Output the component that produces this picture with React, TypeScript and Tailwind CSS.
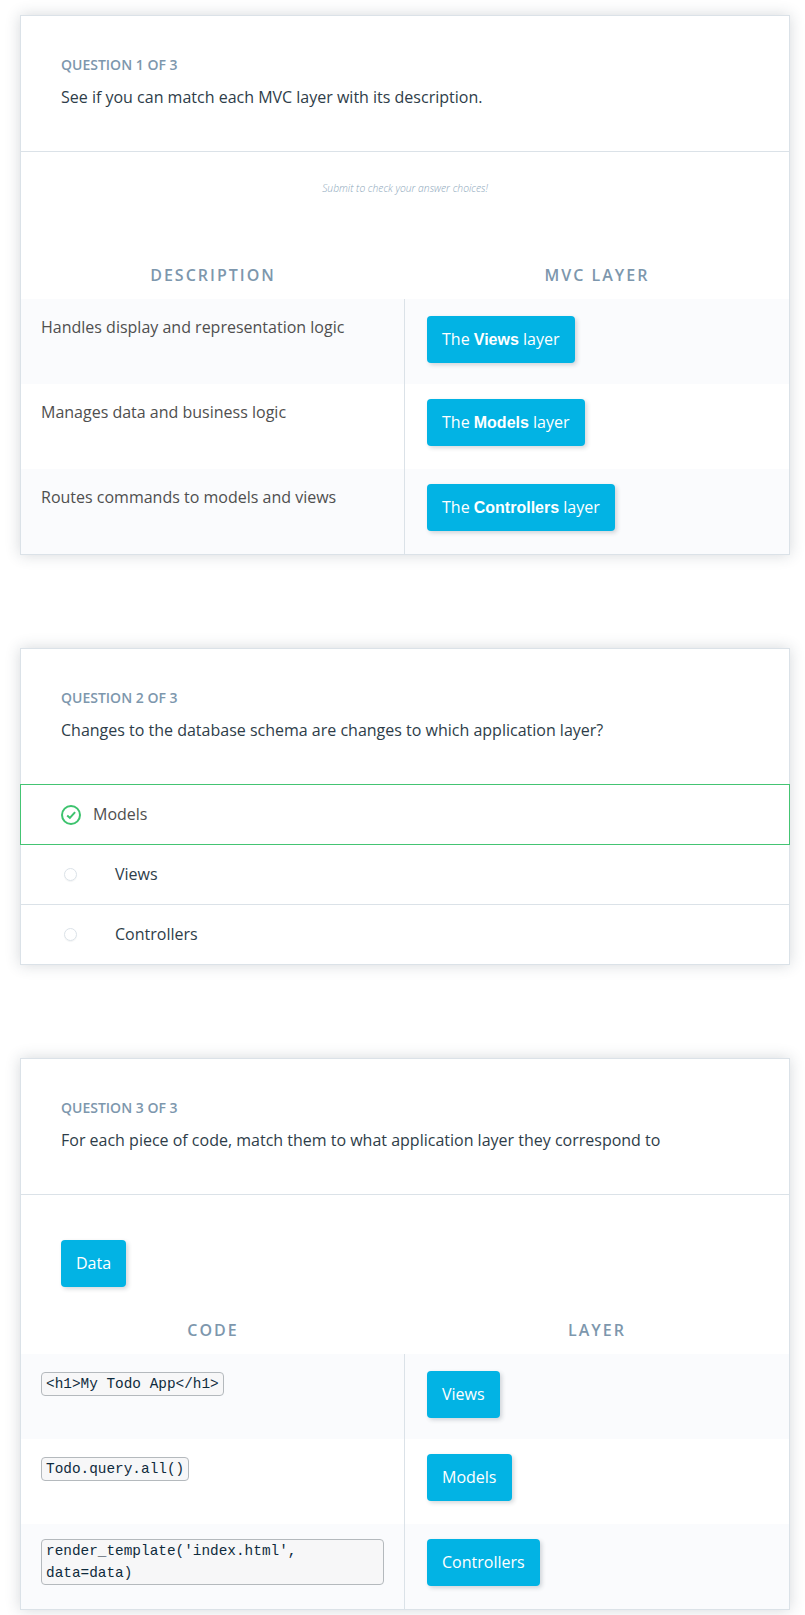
import React from "react";

function Card({ index, prompt, divided = true, children }: { index: number; prompt: string; divided?: boolean; children: React.ReactNode }) {
  return (
    <section className="w-[770px] border border-[#dbe2e8] bg-white shadow-[0_0_14px_rgba(46,61,73,0.2)]">
      <header className={divided ? "h-[136px] border-b border-[#dbe2e8] px-10 pt-[37px]" : "h-[135px] px-10 pt-[37px]"}>
        <h2 className="text-[14px] leading-6 font-semibold text-[#7d97ad]">QUESTION {index} OF 3</h2>
        <p className="mt-2 text-base leading-6 text-[#2e3d49]">{prompt}</p>
      </header>
      {children}
    </section>
  );
}

function Tile({ children }: { children: React.ReactNode }) {
  return (
    <button className="block h-[47px] rounded-[4px] bg-[#02b3e4] pt-[11px] pr-[15.4px] pb-3 pl-[15px] text-base leading-6 whitespace-nowrap text-white shadow-[2px_2px_4px_rgba(46,61,73,0.2)]">
      {children}
    </button>
  );
}

function Code({ children }: { children: React.ReactNode }) {
  return (
    <code className="block rounded-[4px] border border-[#b4b9bd] bg-[#f7f7f8] px-1 font-['Liberation_Mono',monospace] text-[14.4px] leading-[22px] text-[#0f2b3d]">
      {children}
    </code>
  );
}

function Headings({ left, right }: { left: string; right: string }) {
  return (
    <div className="flex h-12 text-center text-base leading-6 font-semibold tracking-[2px] text-[#7d97ad]">
      <div className="w-[384px] pt-3">{left}</div>
      <div className="w-[384px] pt-3">{right}</div>
    </div>
  );
}

function Row({ left, right, shaded, first }: { left: React.ReactNode; right: React.ReactNode; shaded: boolean; first: boolean }) {
  return (
    <div className={shaded ? "flex h-[85px] bg-[#fafbfd]" : "flex h-[85px] bg-white"}>
      <div className="flex w-[384px] items-start border-r border-[#dbe2e8] px-5">{left}</div>
      <div className={first ? "pt-[17px] pl-[22px]" : "pt-[15px] pl-[22px]"}>
        <Tile>{right}</Tile>
      </div>
    </div>
  );
}

function Strong({ children }: { children: React.ReactNode }) {
  return <strong className="font-['Liberation_Sans',sans-serif] font-bold">{children}</strong>;
}

function Option({ label, last = false }: { label: string; last?: boolean }) {
  return (
    <div className={last ? "flex h-[59px] items-center pl-[43px]" : "flex h-[60px] items-center border-b border-[#dbe2e8] pl-[43px]"}>
      <span className="h-[13px] w-[13px] rounded-full border border-[#dbe2e8] shadow-[0_1px_1px_rgba(46,61,73,0.06)]" />
      <span className="ml-[38px] pb-[2px] text-base leading-6 text-[#2e3d49]">{label}</span>
    </div>
  );
}

const layers = [
  ["Handles display and representation logic", "Views"],
  ["Manages data and business logic", "Models"],
  ["Routes commands to models and views", "Controllers"],
];

export default function App() {
  return (
    <main className="flex h-[1615px] flex-col gap-[93px] overflow-hidden bg-white pt-[15px] pl-5 font-['Open_Sans',sans-serif]">
      <Card index={1} prompt="See if you can match each MVC layer with its description.">
        <p className="h-[99px] pt-[27px] text-center text-[10.3px] leading-[18px] font-light text-[#8ba6ba] italic">Submit to check your answer choices!</p>
        <Headings left="DESCRIPTION" right="MVC LAYER" />
        {layers.map(([text, name], i) => (
          <Row
            key={name}
            shaded={i !== 1}
            first={i === 0}
            left={<p className="pt-4 text-base leading-6 text-[#4f4f4f]">{text}</p>}
            right={<>The <Strong>{name}</Strong> layer</>}
          />
        ))}
      </Card>

      <Card index={2} prompt="Changes to the database schema are changes to which application layer?" divided={false}>
        <div className="-mx-px flex h-[61px] items-center border border-[#44c473] pl-10">
          <svg className="mt-px h-5 w-5" viewBox="0 0 20 20" fill="none" stroke="#3dc36e" strokeWidth="2">
            <circle cx="10" cy="10" r="9" />
            <path d="M6.2 10.4 8.9 12.9 14.1 7.1" />
          </svg>
          <span className="ml-3 pb-[2px] text-base leading-6 text-[#4f4f4f]">Models</span>
        </div>
        <Option label="Views" />
        <Option label="Controllers" last />
      </Card>

      <Card index={3} prompt="For each piece of code, match them to what application layer they correspond to">
        <div className="h-[111px] pt-[45px] pl-10">
          <Tile>Data</Tile>
        </div>
        <Headings left="CODE" right="LAYER" />
        <Row shaded first left={<div className="pt-[18px]"><Code>{"<h1>My Todo App</h1>"}</Code></div>} right="Views" />
        <Row shaded={false} first={false} left={<div className="pt-[18px]"><Code>Todo.query.all()</Code></div>} right="Models" />
        <Row shaded first={false} left={<div className="w-full pt-[15px]"><Code>render_template('index.html', data=data)</Code></div>} right="Controllers" />
      </Card>
    </main>
  );
}
